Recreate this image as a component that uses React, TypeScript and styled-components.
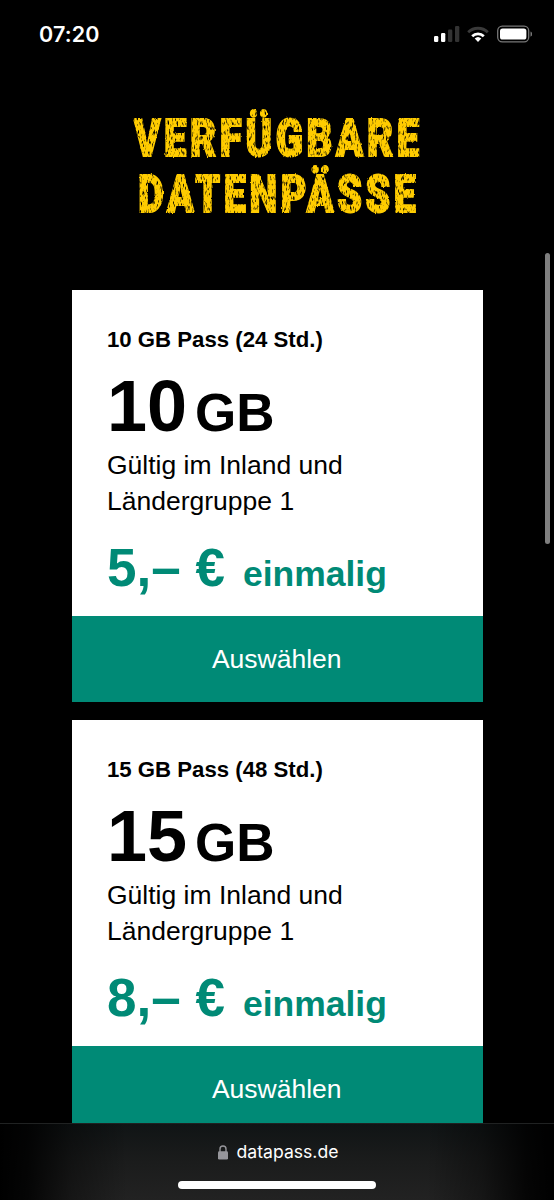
import React from 'react';
import styled, { createGlobalStyle } from 'styled-components';

const GlobalStyle = createGlobalStyle`
  * { box-sizing: border-box; }
  body { margin: 0; background: #000; }
`;

const Screen = styled.div`
  position: relative;
  display: flex;
  flex-direction: column;
  width: 554px;
  height: 1200px;
  overflow: hidden;
  background: #000;
  color: #000;
  font-family: 'Liberation Sans', Arial, sans-serif;
`;

const StatusBar = styled.header`
  flex: none;
  display: flex;
  align-items: center;
  justify-content: space-between;
  height: 68px;
  padding: 0 22px 0 39px;
  color: #fff;
`;

const Clock = styled.time`
  font: 600 21.5px/30px Inter, sans-serif;
  letter-spacing: 0.15px;
`;

const StatusIcons = styled.svg`
  display: block;
  width: 100px;
  height: 20px;
`;

const Content = styled.main`
  flex: 1;
  min-height: 0;
  overflow: hidden;
  padding-top: 43px;
`;

const Title = styled.h1`
  display: flex;
  flex-direction: column;
  align-items: center;
  margin: 0 0 67px;
  color: #ffcc00;
  font: 900 51.5px/56px Roboto, sans-serif;
  text-transform: uppercase;
  -webkit-text-stroke: 2px #ffcc00;
  filter: url(#chalk);
`;

const TitleLine = styled.span<{ $stretch: number }>`
  display: block;
  letter-spacing: 4.8px;
  margin-right: -3px;
  white-space: nowrap;
  transform: scaleX(${(p) => p.$stretch});
`;

const FilterDefs = styled.svg`
  position: absolute;
  width: 0;
  height: 0;
`;

const PassList = styled.section`
  display: flex;
  flex-direction: column;
  gap: 18px;
  margin: 0 71.5px 0 72px;
`;

const Card = styled.article`
  display: flex;
  flex-direction: column;
  height: 412px;
  background: #fff;
`;

const CardBody = styled.div`
  flex: 1;
  padding: 32px 35px 0;
`;

const PassName = styled.h2`
  margin: 0;
  font-size: 22.2px;
  line-height: 36px;
`;

const Volume = styled.div`
  display: flex;
  align-items: baseline;
  gap: 8px;
  height: 81px;
  margin-top: 8px;
  font-size: 72px;
  font-weight: 700;
  line-height: 80px;
`;

const Unit = styled.span`
  font-size: 53px;
`;

const Validity = styled.p`
  width: 260px;
  margin: 0;
  font-size: 26.5px;
  line-height: 36px;
`;

const Price = styled.div`
  display: flex;
  align-items: baseline;
  gap: 18px;
  margin-top: 19px;
  color: #008a76;
  font-size: 53px;
  font-weight: 700;
  line-height: 60px;
`;

const Period = styled.span`
  font-size: 35.5px;
`;

const SelectButton = styled.button`
  flex: none;
  height: 86px;
  padding: 0 1px 0 0;
  border: 0;
  background: #008a76;
  color: #fff;
  font: 400 26.5px/36px 'Liberation Sans', Arial, sans-serif;
`;

const ScrollThumb = styled.div`
  position: absolute;
  top: 253px;
  right: 4px;
  width: 5px;
  height: 291px;
  border-radius: 3px;
  background: #7f7f7f;
`;

const BrowserBar = styled.footer`
  flex: none;
  display: flex;
  flex-direction: column;
  align-items: center;
  height: 77px;
  border-top: 1px solid #202222;
  background:
    linear-gradient(90deg, #000 0, rgba(0, 0, 0, 0.85) 5%, rgba(0, 0, 0, 0.35) 13%, transparent 23%, transparent 77%, rgba(0, 0, 0, 0.35) 87%, rgba(0, 0, 0, 0.85) 95%, #000 100%),
    linear-gradient(#101415, #1b1c1c 50%, #222);
`;

const Address = styled.div`
  display: flex;
  align-items: center;
  gap: 9px;
  height: 24px;
  margin-top: 16px;
  padding-left: 2px;
  color: #fff;
  font: 400 17.6px/24px Inter, sans-serif;
`;

const HomeIndicator = styled.div`
  width: 198px;
  height: 8px;
  margin-top: 17px;
  border-radius: 4px;
  background: #fff;
`;

const passes = [
  { name: '10 GB Pass (24 Std.)', volume: '10', price: '5,– €' },
  { name: '15 GB Pass (48 Std.)', volume: '15', price: '8,– €' },
];

export default function App() {
  return (
    <Screen>
      <GlobalStyle />
      <FilterDefs aria-hidden="true">
        <filter id="chalk" x="0" y="-10%" width="100%" height="120%" colorInterpolationFilters="sRGB">
          <feTurbulence type="fractalNoise" baseFrequency="0.65 0.2" numOctaves="2" seed="7" result="grain" />
          <feColorMatrix in="grain" type="matrix" values="0 0 0 0 0  0 0 0 0 0  0 0 0 0 0  4 0 0 0 -0.8" result="strokes" />
          <feDisplacementMap in="SourceGraphic" in2="grain" scale="2" xChannelSelector="G" yChannelSelector="B" result="rough" />
          <feComposite in="rough" in2="strokes" operator="in" />
        </filter>
      </FilterDefs>
      <StatusBar>
        <Clock>07:20</Clock>
        <StatusIcons viewBox="432 24 100 20">
          <g fill="#fff">
            <rect x="434" y="36" width="4.3" height="6" rx="1.2" />
            <rect x="441" y="33" width="4.3" height="9" rx="1.2" />
            <rect x="448" y="29.5" width="4.3" height="12.5" rx="1.2" fill="#333" />
            <rect x="455" y="26" width="4.3" height="16" rx="1.2" fill="#333" />
            <path d="M478 42l-3.3-3.4a4.8 4.8 0 0 1 6.6 0z" />
          </g>
          <path d="M472.2 36.3a8.2 8.2 0 0 1 11.6 0" fill="none" stroke="#fff" strokeWidth="2.7" />
          <path d="M468.2 32.3a13.9 13.9 0 0 1 19.6 0" fill="none" stroke="#3a3a3a" strokeWidth="2.8" />
          <rect x="497.7" y="26.2" width="31" height="15.6" rx="4.6" fill="none" stroke="#777" strokeWidth="1.3" />
          <rect x="500" y="28.4" width="26.4" height="11.2" rx="2.6" fill="#fff" />
          <path d="M530.5 31.5q2 1 2 2.6t-2 2.6z" fill="#777" />
        </StatusIcons>
      </StatusBar>
      <Content>
        <Title>
          <TitleLine $stretch={0.775}>Verfügbare</TitleLine>
          <TitleLine $stretch={0.765}>Datenpässe</TitleLine>
        </Title>
        <PassList>
          {passes.map((pass) => (
            <Card key={pass.name}>
              <CardBody>
                <PassName>{pass.name}</PassName>
                <Volume>
                  {pass.volume}
                  <Unit>GB</Unit>
                </Volume>
                <Validity>Gültig im Inland und Ländergruppe 1</Validity>
                <Price>
                  {pass.price}
                  <Period>einmalig</Period>
                </Price>
              </CardBody>
              <SelectButton type="button">Auswählen</SelectButton>
            </Card>
          ))}
        </PassList>
      </Content>
      <BrowserBar>
        <Address>
          <svg width="10" height="15" viewBox="0 0 10 15" aria-hidden="true">
            <path d="M2 7V4a3 3 0 0 1 6 0v3" fill="none" stroke="#96969b" strokeWidth="1.4" />
            <rect x="0" y="6.3" width="10" height="8.2" rx="1.3" fill="#96969b" />
          </svg>
          datapass.de
        </Address>
        <HomeIndicator />
      </BrowserBar>
      <ScrollThumb />
    </Screen>
  );
}
